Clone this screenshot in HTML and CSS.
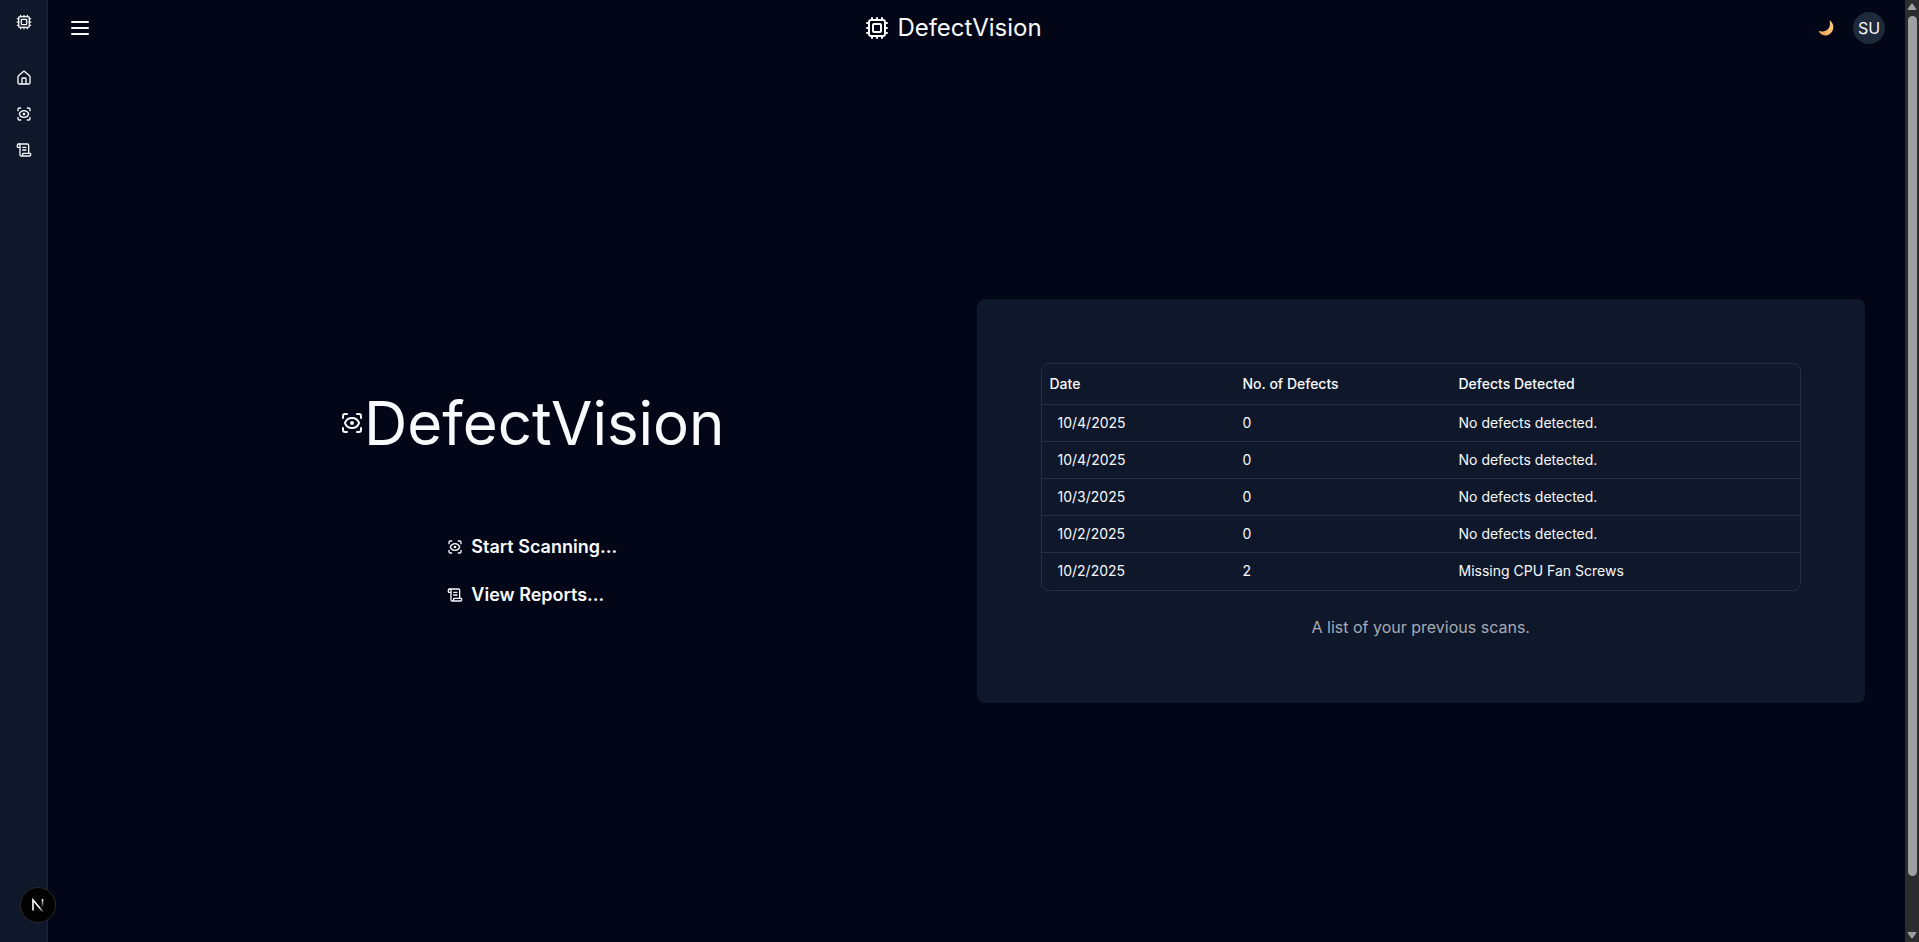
FILE: index.html
```html
<!DOCTYPE html>
<html lang="en">
<head>
<meta charset="utf-8">
<title>DefectVision</title>
<link rel="stylesheet" href="styles.css">
</head>
<body>
<svg class="sprite" aria-hidden="true">
  <symbol id="cpu" viewBox="0 0 24 24"><rect x="4" y="4" width="16" height="16" rx="2"/><rect x="8" y="8" width="8" height="8" rx="1"/><path d="M12 2v2M17 2v2M7 2v2M12 20v2M17 20v2M7 20v2M2 12h2M2 17h2M2 7h2M20 12h2M20 17h2M20 7h2"/></symbol>
  <symbol id="house" viewBox="0 0 24 24"><path d="M15 21v-8a1 1 0 0 0-1-1h-4a1 1 0 0 0-1 1v8"/><path d="M3 10a2 2 0 0 1 .709-1.528l7-5.999a2 2 0 0 1 2.582 0l7 5.999A2 2 0 0 1 21 10v9a2 2 0 0 1-2 2H5a2 2 0 0 1-2-2z"/></symbol>
  <symbol id="scan-eye" viewBox="0 0 24 24"><path d="M3 7V5a2 2 0 0 1 2-2h2M17 3h2a2 2 0 0 1 2 2v2M21 17v2a2 2 0 0 1-2 2h-2M7 21H5a2 2 0 0 1-2-2v-2"/><circle cx="12" cy="12" r="1"/><path d="M18.944 12.33a1 1 0 0 0 0-.66 7.5 7.5 0 0 0-13.888 0 1 1 0 0 0 0 .66 7.5 7.5 0 0 0 13.888 0"/></symbol>
  <symbol id="scroll" viewBox="0 0 24 24"><path d="M15 12h-5M15 8h-5M19 17V5a2 2 0 0 0-2-2H4"/><path d="M8 21h12a2 2 0 0 0 2-2v-1a1 1 0 0 0-1-1H11a1 1 0 0 0-1 1v1a2 2 0 1 1-4 0V5a2 2 0 1 0-4 0v2a1 1 0 0 0 1 1h3"/></symbol>
  <symbol id="menu" viewBox="0 0 24 24"><path d="M4 6h16M4 12h16M4 18h16"/></symbol>
</svg>
<div class="app">
  <aside class="sidebar">
    <a class="side-link side-logo" href="#" aria-label="DefectVision"><svg class="icon icon-sm"><use href="#cpu"/></svg></a>
    <nav class="side-nav" aria-label="Main">
      <a class="side-link" href="#" aria-label="Home"><svg class="icon icon-sm"><use href="#house"/></svg></a>
      <a class="side-link" href="#" aria-label="Scan"><svg class="icon icon-sm"><use href="#scan-eye"/></svg></a>
      <a class="side-link" href="#" aria-label="Reports"><svg class="icon icon-sm"><use href="#scroll"/></svg></a>
    </nav>
  </aside>

  <div class="page">
    <header class="topbar">
      <button class="plain-button" type="button" aria-label="Toggle sidebar"><svg class="icon"><use href="#menu"/></svg></button>
      <a class="brand" href="#"><svg class="icon"><use href="#cpu"/></svg><span>DefectVision</span></a>
      <div class="account">
        <button class="plain-button theme-button" type="button" aria-label="Toggle theme">
          <svg class="moon" viewBox="0 0 16 16">
            <defs><linearGradient id="moon-fill" x1="0" y1="1" x2="1" y2="0"><stop offset="0" stop-color="#e8945a"/><stop offset=".4" stop-color="#fbbb62"/><stop offset="1" stop-color="#fcd58c"/></linearGradient></defs>
            <path fill="url(#moon-fill)" d="M11.4.6C14.200 2 15.800 5 15.200 8.400 14.400 12.800 10.800 15.500 7 15.400 4 15.300 1.400 13.400.5 10.700 4 12.200 8.200 11.600 10.500 8.600 12.200 6.300 12.400 3.200 11.400.6z"/>
          </svg>
        </button>
        <button class="avatar" type="button">SU</button>
      </div>
    </header>

    <main class="content">
      <section class="intro">
        <div class="hero"><svg class="icon"><use href="#scan-eye"/></svg><h1 class="hero-title">DefectVision</h1></div>
        <div class="actions">
          <a class="action" href="#"><svg class="icon icon-sm"><use href="#scan-eye"/></svg>Start Scanning...</a>
          <a class="action" href="#"><svg class="icon icon-sm"><use href="#scroll"/></svg>View Reports...</a>
        </div>
      </section>

      <section class="card">
        <div class="table-frame">
          <table class="scans" aria-describedby="scans-note">
            <colgroup><col class="col-date"><col class="col-count"><col></colgroup>
            <thead><tr><th scope="col">Date</th><th scope="col">No. of Defects</th><th scope="col">Defects Detected</th></tr></thead>
            <tbody>
              <tr><td>10/4/2025</td><td>0</td><td>No defects detected.</td></tr>
              <tr><td>10/4/2025</td><td>0</td><td>No defects detected.</td></tr>
              <tr><td>10/3/2025</td><td>0</td><td>No defects detected.</td></tr>
              <tr><td>10/2/2025</td><td>0</td><td>No defects detected.</td></tr>
              <tr><td>10/2/2025</td><td>2</td><td>Missing CPU Fan Screws</td></tr>
            </tbody>
          </table>
        </div>
        <p class="note" id="scans-note">A list of your previous scans.</p>
      </section>
    </main>
  </div>

  <div class="scrollbar" aria-hidden="true">
    <svg class="arrow" viewBox="0 0 10 8"><path d="M4 1.200Q5 0 6 1.200L9.300 6Q9.800 7 8.800 7H1.200Q.2 7 .7 6z"/></svg>
    <div class="track"><div class="thumb"></div></div>
    <svg class="arrow" viewBox="0 0 10 8"><path d="M4 6.800Q5 8 6 6.800L9.300 2Q9.800 1 8.800 1H1.200Q.2 1 .7 2z"/></svg>
  </div>
</div>

<button class="dev-badge" type="button" aria-label="Open developer tools">
  <svg class="dev-mark" viewBox="0 0 14 14" fill="none">
    <defs>
      <linearGradient id="diagonal" gradientUnits="userSpaceOnUse" x1="7" y1="7" x2="13" y2="14"><stop offset=".3" stop-color="#fff"/><stop offset="1" stop-color="#fff" stop-opacity="0"/></linearGradient>
      <linearGradient id="stem" gradientUnits="userSpaceOnUse" x1="0" y1="1" x2="0" y2="10"><stop stop-color="#fff"/><stop offset="1" stop-color="#fff" stop-opacity="0"/></linearGradient>
    </defs>
    <path d="M2 12.500V2L12.200 14" stroke="url(#diagonal)" stroke-width="1.600"/>
    <path d="M11.500 1V10" stroke="url(#stem)" stroke-width="1.600"/>
  </svg>
</button>
</body>
</html>
```
FILE: styles.css
```css
* { box-sizing: border-box; }

body {
  margin: 0;
  background: #020617;
  color: #f8fafc;
  font-family: Inter, "Liberation Sans", sans-serif;
  font-size: 16px;
  line-height: 24px;
}

a { color: inherit; text-decoration: none; }

button { font: inherit; color: inherit; cursor: pointer; }

.sprite { position: absolute; width: 0; height: 0; }

.app { display: flex; min-height: 100vh; }

.icon {
  display: block;
  flex: none;
  width: 24px;
  height: 24px;
  fill: none;
  stroke: currentColor;
  stroke-width: 2;
  stroke-linecap: round;
  stroke-linejoin: round;
}

.icon-sm { width: 16px; height: 16px; }

/* Sidebar */
.sidebar {
  flex: none;
  width: 48px;
  padding: 6px 8px;
  background: #0f172a;
  border-right: 1px solid #1c2436;
}

.side-link {
  display: flex;
  align-items: center;
  width: 32px;
  height: 32px;
  padding: 8px;
}

.side-nav {
  display: flex;
  flex-direction: column;
  gap: 4px;
  margin-top: 24px;
}

/* Header */
.page { flex: 1; display: flex; flex-direction: column; min-width: 0; }

.topbar {
  display: flex;
  align-items: center;
  justify-content: space-between;
  padding: 12px 20px 15px;
}

.plain-button { padding: 0; border: 0; background: none; }

.brand {
  display: flex;
  align-items: center;
  gap: 8px;
  font-size: 24px;
  line-height: 32px;
}

.account {
  display: flex;
  align-items: center;
  gap: 16px;
}

.theme-button { display: grid; place-items: center; width: 22px; height: 24px; }

.moon { display: block; width: 16px; height: 16px; }

.avatar {
  width: 32px;
  height: 32px;
  padding: 0;
  border: 0;
  border-radius: 50%;
  background: #1e293b;
}

/* Content */
.content {
  flex: 1;
  display: grid;
  grid-template-columns: 1fr 1fr;
  align-items: center;
  padding: 0 40px;
}

.intro {
  display: flex;
  flex-direction: column;
  align-items: center;
  gap: 80px;
}

.hero { display: flex; align-items: center; }

.hero-title {
  margin: 0;
  font-size: 60px;
  font-weight: 400;
  line-height: 60px;
}

.actions { display: flex; flex-direction: column; gap: 20px; }

.action {
  display: flex;
  align-items: center;
  gap: 8px;
  font-size: 18px;
  font-weight: 600;
  line-height: 28px;
}

.card {
  padding: 64px;
  border-radius: 8px;
  background: #0f172a;
}

.table-frame {
  border: 1px solid #272e3f;
  border-radius: 8px;
}

.scans {
  width: 100%;
  border-collapse: collapse;
  table-layout: fixed;
  font-size: 14px;
  line-height: 20px;
  text-align: left;
}

.col-date { width: 193px; }
.col-count { width: 216px; }

.scans th { height: 41px; padding: 0 8px; font-weight: 500; }
.scans td { height: 37px; padding: 8px; }
.scans td:first-child { padding-left: 16px; }
.scans tr { border-bottom: 1px solid #272e3f; }
.scans tbody tr:last-child { border-bottom: 0; }

.note {
  margin: 24px 0 0;
  color: #a6abb5;
  text-align: center;
}

/* Scrollbar */
.scrollbar {
  flex: none;
  display: flex;
  flex-direction: column;
  align-items: center;
  width: 14px;
  padding: 3px 0;
  background: #2c2c2c;
}

.arrow { display: block; width: 10px; height: 8px; fill: #9f9f9f; }

.track { flex: 1; padding: 5px 0; }

.thumb {
  width: 9px;
  height: 94.5%;
  border-radius: 5px;
  background: #9f9f9f;
}

/* Floating developer badge */
.dev-badge {
  position: fixed;
  bottom: 19px;
  left: 20px;
  display: grid;
  place-items: center;
  width: 36px;
  height: 36px;
  padding: 0;
  border: 1px solid #2a2a2a;
  border-radius: 50%;
  background: #020203;
}

.dev-mark { width: 14px; height: 14px; }
```
